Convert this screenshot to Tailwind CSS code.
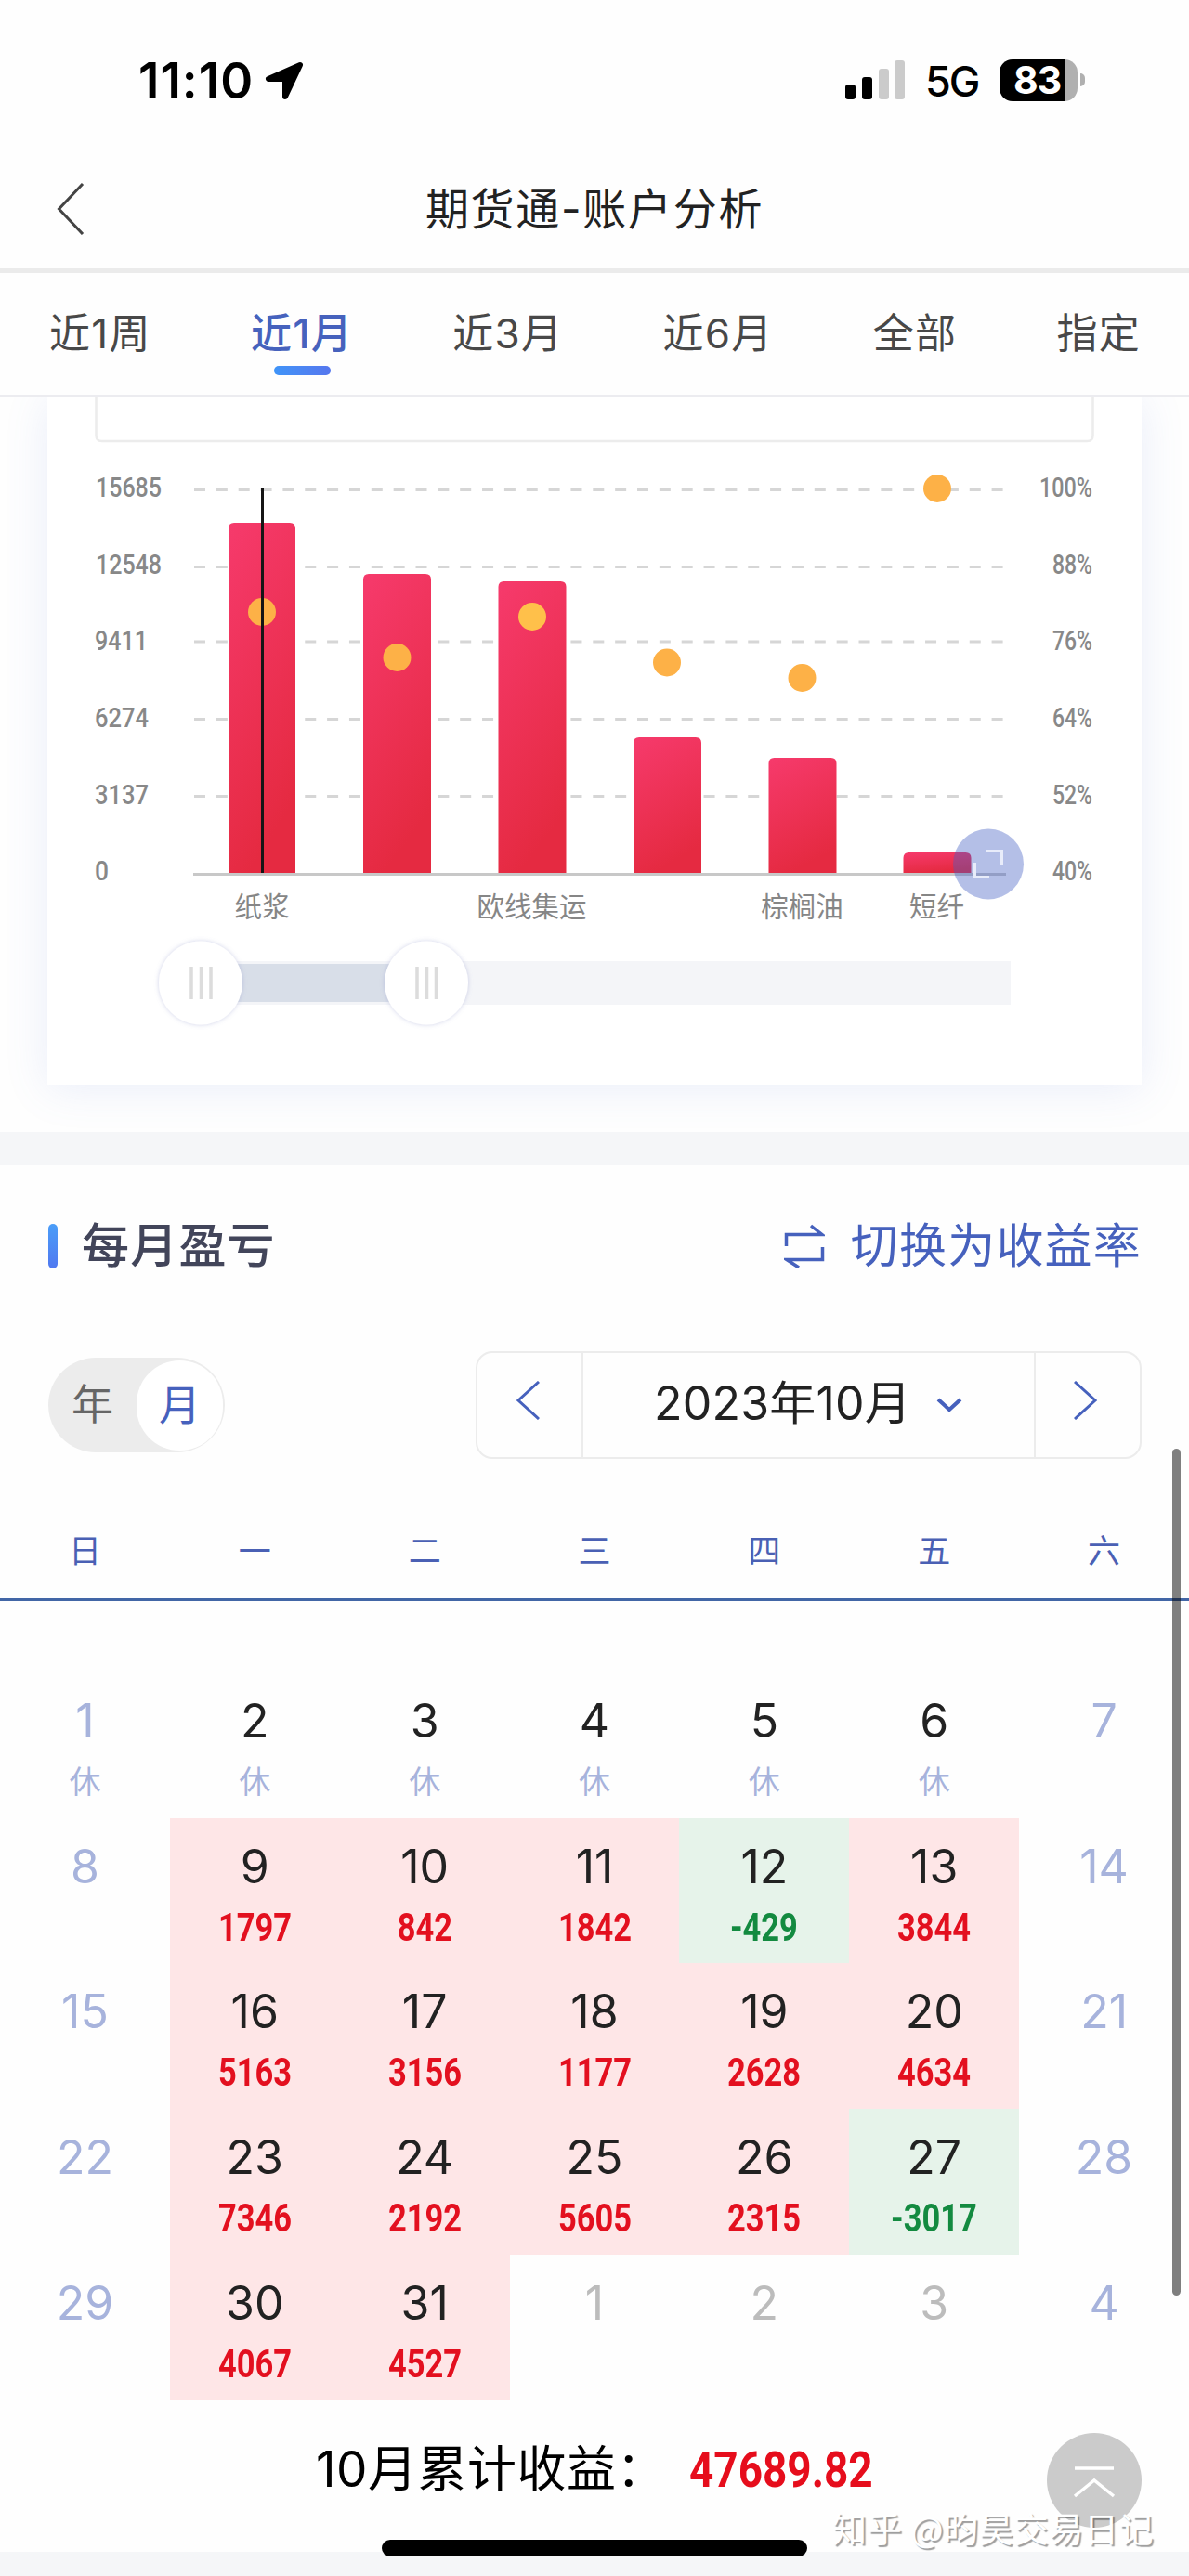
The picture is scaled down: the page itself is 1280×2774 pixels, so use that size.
<!DOCTYPE html>
<html lang="zh-CN">
<head>
    <meta charset="UTF-8">
    <meta name="viewport" content="width=device-width, initial-scale=1.0">
    <title>期货通-账户分析</title>
    <script src="https://cdn.jsdelivr.net/npm/@tailwindcss/browser@4"></script>
</head>
<body class="bg-white font-['Inter','Noto_Sans_CJK_SC',sans-serif] text-[#222]">
<div class="relative w-[1280px] h-[2774px] overflow-hidden bg-[#fefefe]">

    <!-- Status bar -->
    <div class="h-[160px] pt-[62px] pl-[149px] pr-[112px] flex items-start justify-between text-black">
        <div class="flex items-center h-[50px]">
            <span class="w-[136px] text-[53px] leading-[52px] font-semibold tracking-[1px]">11:10</span>
            <svg class="w-[43px] h-[42px]" viewBox="0 0 43 42" stroke="#000" stroke-width="6" stroke-linejoin="round"><path d="M38 4L4 19H22V38Z"/></svg>
        </div>
        <div class="flex items-center h-[48px]">
            <svg class="w-[66px] h-[44px]" viewBox="0 0 66 44">
                <rect x="1" y="27" width="11" height="16" rx="3"/>
                <rect x="19" y="19" width="11" height="24" rx="3"/>
                <rect x="37" y="10" width="11" height="33" rx="3" fill="#cbcbcb"/>
                <rect x="54" y="1" width="11" height="42" rx="3" fill="#cbcbcb"/>
            </svg>
            <span class="ml-[21px] w-[80px] text-[45px] leading-[48px] font-medium tracking-[-2px] pt-[4px]">5G</span>
            <div class="w-[84px] h-[45px] rounded-[14px] bg-linear-to-r from-black from-[83%] to-[#b0b0b0] to-[83%] pl-[15px]">
                <span class="block text-[41px] leading-[45px] font-bold text-white tracking-[-1px]">83</span>
            </div>
            <div class="ml-[3px] w-[5px] h-[14px] rounded-r-full bg-[#b0b0b0]"></div>
        </div>
    </div>

    <!-- Title bar -->
    <div class="h-[134px] border-b-[5px] border-[#ebebeb] grid grid-cols-[150px_1fr_150px] items-start">
        <svg class="ml-[60px] mt-[37px] w-[32px] h-[56px]" viewBox="0 0 32 56" fill="none" stroke="#444" stroke-width="3"><path d="M29 1 L3.500 28 L29 55"/></svg>
        <h1 class="mt-[35px] text-center text-[47px] leading-[60px] tracking-[1.700px]">期货通-账户分析</h1>
    </div>

    <!-- Period tabs -->
    <div class="h-[133px] border-b-2 border-[#ececf0] pt-[36px] pl-[53px] pr-[53px] flex justify-between text-[44px] leading-[58px] tracking-[1.300px] text-[#484848]">
        <span>近1周</span>
        <span class="relative font-medium text-[#4662bd]">近1月<i class="absolute left-[25px] top-[64px] w-[61px] h-[10px] rounded-full bg-linear-to-r from-[#3f94f8] to-[#5577ee]"></i></span>
        <span>近3月</span>
        <span>近6月</span>
        <span>全部</span>
        <span class="mr-[-1px]">指定</span>
    </div>

    <!-- Chart card -->
    <div class="h-[792px] px-[51px] overflow-hidden">
        <div class="w-[1178px] h-[741px] bg-white shadow-[0_4px_44px_rgba(90,120,220,0.13)]">
            <svg class="w-[1178px] h-[741px]" viewBox="51 427 1178 741">
                <defs>
                    <linearGradient id="bar" x1="0" y1="0" x2="0.300" y2="1"><stop offset="0" stop-color="#f63a6c"/><stop offset="1" stop-color="#e52a41"/></linearGradient>
                    <filter id="soft" x="-30%" y="-30%" width="160%" height="160%"><feDropShadow dx="0" dy="0" stdDeviation="2.500" flood-color="#8890c8" flood-opacity="0.400"/></filter>
                </defs>
                <path d="M103.500 420 V469 Q103.500 475 109.500 475 H1170.500 Q1176.500 475 1176.500 469 V420" fill="none" stroke="#ececec" stroke-width="2.500"/>
                <g stroke="#d6d6d6" stroke-width="3" stroke-dasharray="12 11.850">
                    <path d="M209 527.500H1080M209 610.500H1080M209 691H1080M209 774.500H1080M209 857.500H1080"/>
                </g>
                <path d="M208 941.500H1083" stroke="#c8c8c8" stroke-width="3"/>
                <g fill="url(#bar)">
                    <path d="M246 940V569q0-6 6-6h60q6 0 6 6V940z"/>
                    <path d="M391 940V624q0-6 6-6h61q6 0 6 6V940z"/>
                    <path d="M536.500 940V632q0-6 6-6h61q6 0 6 6V940z"/>
                    <path d="M682 940V800q0-6 6-6h61q6 0 6 6V940z"/>
                    <path d="M827.500 940V822q0-6 6-6h61q6 0 6 6V940z"/>
                    <path d="M972.500 940V924q0-6 6-6h61q6 0 6 6V940z"/>
                </g>
                <g fill="#fdb147">
                    <circle cx="282" cy="659" r="15"/><circle cx="427.500" cy="708" r="15"/><circle cx="573" cy="664" r="15" fill="#ffc04a"/>
                    <circle cx="718" cy="713.500" r="15"/><circle cx="863.500" cy="730" r="15"/><circle cx="1009" cy="526" r="15"/>
                </g>
                <path d="M282.500 526V940" stroke="#151515" stroke-width="3"/>
                <g fill="#888" font-family="Roboto" font-size="29.500" font-weight="500">
                    <text x="103" y="534.500" textLength="71" lengthAdjust="spacingAndGlyphs">15685</text>
                    <text x="103" y="617.500" textLength="71" lengthAdjust="spacingAndGlyphs">12548</text>
                    <text x="102" y="700" textLength="57" lengthAdjust="spacingAndGlyphs">9411</text>
                    <text x="102" y="782.500" textLength="58" lengthAdjust="spacingAndGlyphs">6274</text>
                    <text x="102" y="865.500" textLength="58" lengthAdjust="spacingAndGlyphs">3137</text>
                    <text x="102" y="948" textLength="15" lengthAdjust="spacingAndGlyphs">0</text>
                    <text x="1119" y="534.500" textLength="57" lengthAdjust="spacingAndGlyphs">100%</text>
                    <text x="1133" y="617.500" textLength="43" lengthAdjust="spacingAndGlyphs">88%</text>
                    <text x="1133" y="700" textLength="43" lengthAdjust="spacingAndGlyphs">76%</text>
                    <text x="1133" y="782.500" textLength="43" lengthAdjust="spacingAndGlyphs">64%</text>
                    <text x="1133" y="865.500" textLength="43" lengthAdjust="spacingAndGlyphs">52%</text>
                    <text x="1133" y="948" textLength="43" lengthAdjust="spacingAndGlyphs">40%</text>
                </g>
                <g fill="#868686" font-family="Noto Sans CJK SC" font-size="29.500" text-anchor="middle">
                    <text x="282" y="987">纸浆</text>
                    <text x="572.500" y="987">欧线集运</text>
                    <text x="863.500" y="987">棕榈油</text>
                    <text x="1008.500" y="987">短纤</text>
                </g>
                <!-- fullscreen button -->
                <circle cx="1064" cy="930.500" r="38" fill="#4460c4" fill-opacity="0.400"/>
                <path d="M1062 916.500H1078.500V932M1049.500 929V944.500H1065" fill="none" stroke="#e8ecfa" stroke-width="3"/>
                <!-- zoom slider -->
                <rect x="216" y="1035" width="872" height="47" fill="#f4f5f8"/>
                <rect x="216" y="1038" width="243" height="41" fill="#d8dee8"/>
                <g fill="#fff" filter="url(#soft)"><circle cx="216" cy="1058.500" r="45"/><circle cx="459" cy="1058.500" r="45"/></g>
                <path d="M206 1041V1076M216.500 1041V1076M227 1041V1076M449 1041V1076M459.500 1041V1076M469.500 1041V1076" stroke="#dcdcdc" stroke-width="3.500"/>
            </svg>
        </div>
    </div>
    <div class="h-[36px] bg-[#f5f6f8]"></div>

    <!-- Section heading -->
    <div class="h-[200px] pt-[52px] pl-[52px] pr-[53px] flex justify-between">
        <div class="flex h-[70px] items-center">
            <i class="w-[10px] h-[48px] rounded-full bg-linear-to-b from-[#4a9df8] to-[#5078f0]"></i>
            <h2 class="ml-[26px] text-[51px] leading-[68px] font-medium tracking-[1.200px] text-[#42455a]">每月盈亏</h2>
        </div>
        <div class="flex h-[70px] items-center text-[#4661bd]">
            <svg class="w-[44px] h-[48px] mr-[28px]" viewBox="0 0 44 48" fill="none" stroke="currentColor" stroke-width="3.500"><path d="M2.500 24V11.500H41L29 2M41.500 25V38.500H3L16 47"/></svg>
            <span class="text-[51px] leading-[68px] tracking-[1.200px] mr-[-2px]">切换为收益率</span>
        </div>
    </div>

    <!-- Year / month switch and month picker -->
    <div class="h-[170px] pl-[52px] pr-[51px] flex justify-between items-start">
        <div class="mt-[7px] w-[190px] h-[102px] rounded-full bg-[#ececec] flex items-center text-[45px]">
            <span class="w-[95px] text-center text-[#666]">年</span>
            <span class="w-[93px] h-[97px] leading-[97px] rounded-full bg-white text-center text-[#4661bd]">月</span>
        </div>
        <div class="w-[717px] h-[116px] border-2 border-[#ececec] rounded-[18px] flex text-[#4661bd]">
            <div class="w-[114px] border-r-2 border-[#ececec]">
                <svg class="ml-[41px] mt-[30px] w-[26px] h-[42px]" viewBox="0 0 26 42" fill="none" stroke="currentColor" stroke-width="3"><path d="M25 1L3 21L25 41"/></svg>
            </div>
            <div class="flex-1 flex items-center pl-[76px]">
                <span class="w-[304px] text-[50px] leading-[70px] text-[#222] tracking-[0.200px] pb-[4px]">2023年10月</span>
                <svg class="w-[28px] h-[16px]" viewBox="0 0 28 16" fill="none" stroke="currentColor" stroke-width="4"><path d="M2 2L14 13L26 2"/></svg>
            </div>
            <div class="w-[114px] border-l-2 border-[#ececec]">
                <svg class="ml-[41px] mt-[30px] w-[26px] h-[42px]" viewBox="0 0 26 42" fill="none" stroke="currentColor" stroke-width="3"><path d="M1 1L23 21L1 41"/></svg>
            </div>
        </div>
    </div>

    <!-- Calendar -->
    <div class="h-[99px] border-b-3 border-[#4266a6] grid grid-cols-7 text-center text-[35px] leading-[90px] text-[#4a60b4]">
        <span>日</span><span>一</span><span>二</span><span>三</span><span>四</span><span>五</span><span>六</span>
    </div>
    <div id="days" class="mt-[77px] grid grid-cols-7 auto-rows-[156.700px] text-center"></div>

    <!-- Monthly total -->
    <div class="h-[164px] pt-[37px] pl-[340px] flex items-start text-black">
        <span class="w-[402px] whitespace-nowrap text-[53px] leading-[76px] tracking-[0.500px]">10月累计收益：</span>
        <span class="origin-left scale-x-[0.850] font-['Roboto'] text-[54px] leading-[78px] font-bold text-[#e60d1c]">47689.82</span>
    </div>
    <div class="h-[40px] bg-[#f5f6f8]"></div>

    <!-- Overlays: scrollbar, home indicator, back to top, watermark -->
    <div class="absolute left-[1262px] top-[1560px] w-[9px] h-[912px] rounded-full bg-black/50"></div>
    <div class="absolute left-[411px] top-[2735px] w-[458px] h-[18px] rounded-full bg-black"></div>
    <svg class="absolute left-[1126px] top-[2619px] w-[104px] h-[104px]" viewBox="0 0 104 104" fill="none" stroke="#fff" stroke-width="3.500">
        <circle cx="52" cy="52" r="51" fill="#cbcbcb" stroke="none"/>
        <path d="M31 39H73M31 69L52 52L73 69"/>
    </svg>
    <div class="absolute left-[896px] top-[2695px] whitespace-nowrap text-[37px] leading-[54px] tracking-[0.700px] text-white font-['Noto_Sans_CJK_SC'] [text-shadow:2px_2px_1px_rgba(0,0,0,0.380)]">知乎 @昀昊交易日记</div>
</div>

<script>
    const values = {
        9: 1797, 10: 842, 11: 1842, 12: -429, 13: 3844,
        16: 5163, 17: 3156, 18: 1177, 19: 2628, 20: 4634,
        23: 7346, 24: 2192, 25: 5605, 26: 2315, 27: -3017,
        30: 4067, 31: 4527
    };
    const days = document.getElementById('days');
    let html = '';
    for (let i = 1; i <= 35; i++) {
        const day = i > 31 ? i - 31 : i;
        const weekend = i % 7 === 1 || i % 7 === 0;
        const value = values[i];
        const bg = value === undefined ? '' : value > 0 ? 'bg-[#fee6e7]' : 'bg-[#e6f3ea]';
        const color = weekend ? 'text-[#a7b3dc]' : i > 31 ? 'text-[#bcbcbc]' : 'text-[#222]';
        let note = '';
        if (value !== undefined) {
            note = `<div class="scale-x-[0.820] font-['Roboto'] font-bold text-[42px] leading-[50px] mt-[11px] ${value > 0 ? 'text-[#e3101f]' : 'text-[#138a40]'}">${value}</div>`;
        } else if (i <= 6) {
            note = '<div class="text-[34px] leading-[50px] mt-[11px] text-[#a7b3dc]">休</div>';
        }
        html += `<div class="pt-[22px] ${bg}"><div class="text-[50px] leading-[60px] ${color}">${day}</div>${note}</div>`;
    }
    days.innerHTML = html;
</script>
</body>
</html>
